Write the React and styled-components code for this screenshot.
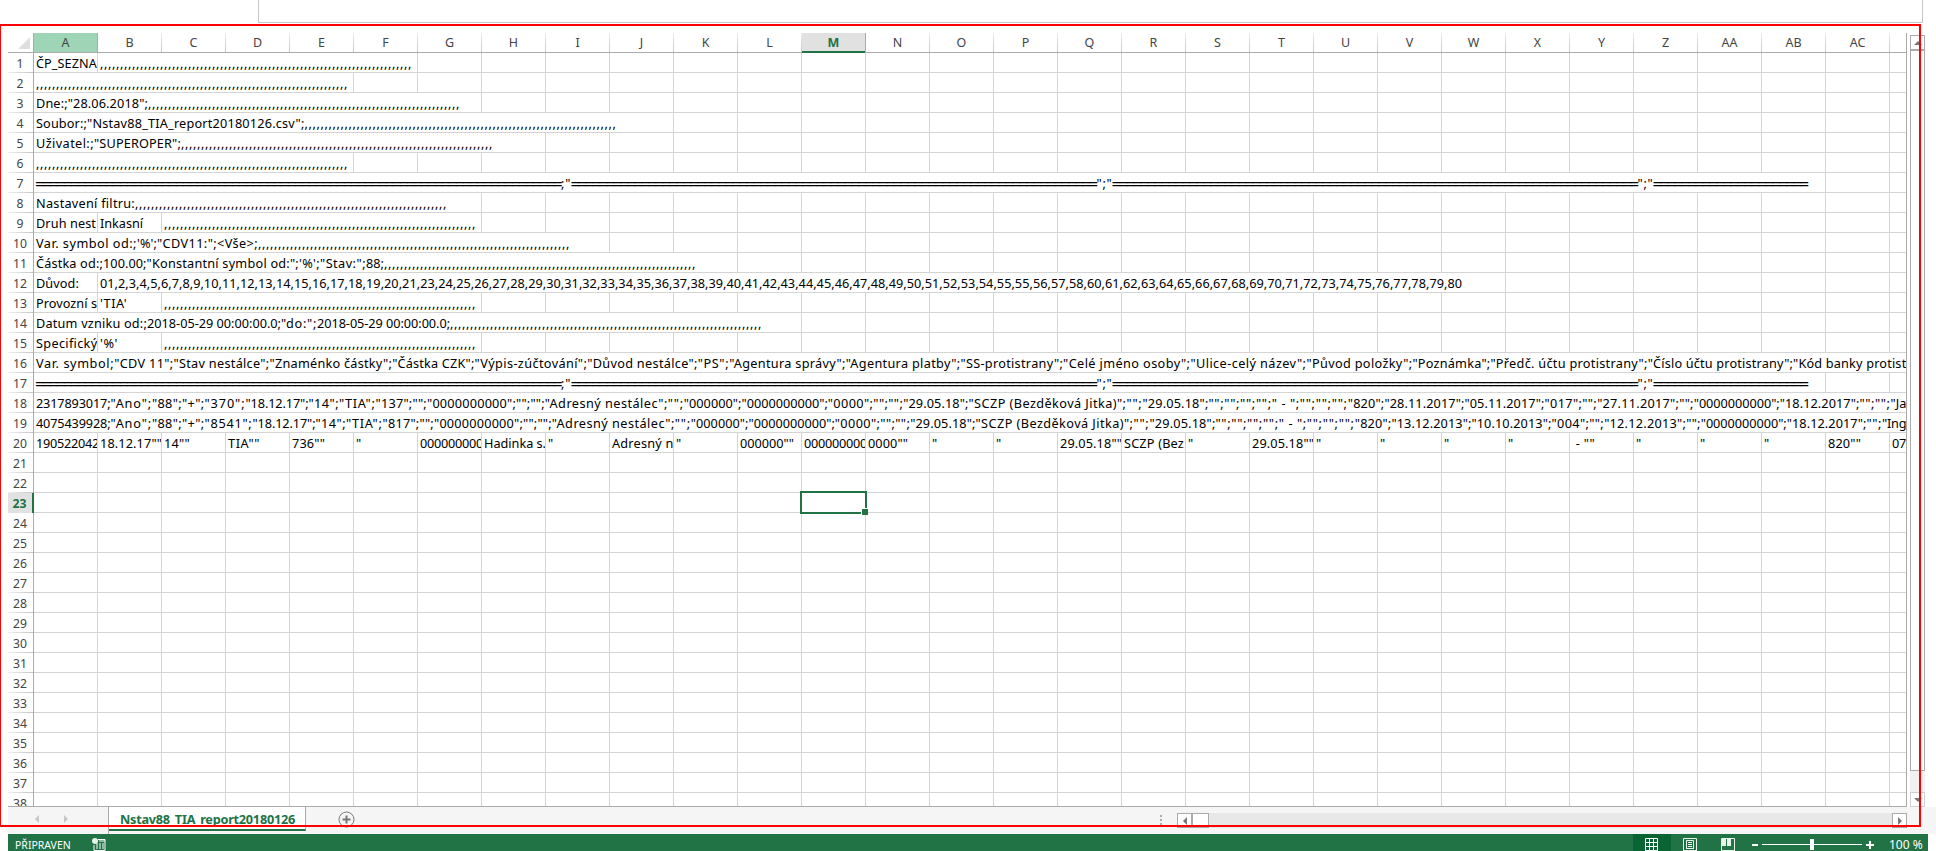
import React, { useLayoutEffect, useRef, useState } from 'react';
import styled, { createGlobalStyle, css } from 'styled-components';

const GREEN = '#217346';
const COL = 64;
const ROW = 20;

const Global = createGlobalStyle`
  * { box-sizing: border-box; }
  body { margin: 0; background: #fff; overflow: hidden; font-family: 'Noto Sans', 'Open Sans', sans-serif; }
`;

const Page = styled.div`
  position: relative;
  width: 1936px;
  height: 851px;
  overflow: hidden;
  display: flex;
  flex-direction: column;
`;

const FormulaBar = styled.div`
  flex: none;
  width: 1665px;
  height: 23px;
  margin-left: 258px;
  border: 1px solid #c6c6c6;
  border-top: 0;
`;

const Workspace = styled.div`
  flex: none;
  display: flex;
  height: 784px;
  padding: 10px 0 0 8px;
`;

const Sheet = styled.div`
  width: 1899px;
  height: 774px;
  overflow: hidden;
  border-right: 1px solid #ababab;
  border-bottom: 1px solid #ababab;
`;

const HeaderRow = styled.div`
  display: flex;
  height: 20px;
  border-bottom: 1px solid #ababab;
`;

const Corner = styled.div`
  width: 26px;
  height: 19px;
  flex: none;
  border-right: 1px solid #ababab;
  padding: 4px 0 0 10px;
  svg { display: block; }
`;

const ColumnHead = styled.div`
  flex: none;
  width: ${COL}px;
  height: 19px;
  line-height: 19px;
  font-size: 12.5px;
  text-align: center;
  color: #444;
  border-right: 1px solid;
  border-image: linear-gradient(#f0f0f0, #c4c4c4) 1;
  ${(p) => p.$tone === 'hover' && css`background: #9fd5b7; border-image: none; border-color: #ababab;`}
  ${(p) => p.$tone === 'active' && css`
    background: #e1e1e1; color: ${GREEN}; font-weight: 700;
    height: 20px; border-image: none; border-color: #ababab;
    box-shadow: inset 0 -2px ${GREEN};
  `}
`;

const SheetRow = styled.div`
  display: flex;
  height: ${ROW}px;
`;

const RowHead = styled.div`
  flex: none;
  width: 26px;
  height: ${ROW}px;
  line-height: 21px;
  padding-right: 1px;
  font-size: 12.2px;
  text-align: center;
  color: #444;
  border-right: 1px solid #ababab;
  background: linear-gradient(90deg, #f0f0f0, #c4c4c4) 0 100% / 100% 1px no-repeat;
  ${(p) => p.$active && css`
    background: #e1e1e1; color: ${GREEN}; font-weight: 700;
    border-right: 2px solid ${GREEN};
  `}
`;

const Cell = styled.div`
  position: relative;
  flex: none;
  width: ${(p) => p.$span * COL}px;
  height: ${ROW}px;
  padding-left: 2px;
  border-right: 1px solid #d4d4d4;
  border-bottom: 1px solid #d4d4d4;
  overflow: ${(p) => (p.$selected ? 'visible' : 'hidden')};
  display: flex;
`;

const RunBox = styled.span`
  flex: none;
  display: block;
  width: ${(p) => p.$width}px;
  height: 19px;
  line-height: 21px;
  font-size: 12.7px;
  white-space: pre;
  ${(p) => p.$rule && css`font-size: 17px; text-indent: -1px;`}
`;

const Selection = styled.div`
  position: absolute;
  left: -2px;
  top: -2px;
  width: 67px;
  height: 23px;
  border: 2px solid ${GREEN};
  z-index: 2;
  &::after {
    content: '';
    position: absolute;
    right: -3px;
    bottom: -3px;
    width: 6px;
    height: 6px;
    background: ${GREEN};
    border-left: 1px solid #fff;
    border-top: 1px solid #fff;
  }
`;

const VerticalScroll = styled.div`
  width: 15px;
  margin: 2px 0 0 3px;
  height: 773px;
  background: #f0f0f0;
  display: flex;
  flex-direction: column;
`;

const ScrollButton = styled.div`
  flex: none;
  width: 15px;
  height: 15px;
  border: 1px solid ${(p) => (p.$light ? '#d0d0d0' : '#ababab')};
  background: #fff;
  display: flex;
  align-items: center;
  justify-content: center;
`;

const VerticalThumb = styled.div`
  height: 721px;
  border: 1px solid #ababab;
  background: #fff;
  margin-bottom: 21px;
`;

const TabBar = styled.div`
  flex: none;
  display: flex;
  width: 1928px;
  height: 27px;
  margin-left: 8px;
  background: #f5f5f5;
`;

const TabNav = styled.div`
  width: 101px;
  height: 27px;
  border-right: 1px solid #ababab;
  padding: 8px 0 0 25px;
  display: flex;
  gap: 21px;
`;

const SheetTab = styled.div`
  width: 197px;
  height: 24px;
  background: #fff;
  border-right: 1px solid #ababab;
  border-bottom: 2px solid ${GREEN};
  color: ${GREEN};
  font-weight: 700;
  padding: 2px 0 0 11px;
`;

const AddSheet = styled.div`
  width: 90px;
  padding: 4px 0 0 32px;
`;

const HorizontalArea = styled.div`
  display: flex;
  margin-left: auto;
  width: 776px;
  padding-top: 6px;
`;

const Grip = styled.div`
  display: flex;
  flex-direction: column;
  gap: 2px;
  width: 17px;
  padding-top: 2px;
  i { width: 2px; height: 2px; background: #ababab; }
`;

const HorizontalTrack = styled.div`
  display: flex;
  width: 730px;
  height: 15px;
  background: #e8e8e8;
`;

const HorizontalThumb = styled.div`
  width: 17px;
  height: 15px;
  border: 1px solid #ababab;
  background: #fff;
  margin-right: auto;
`;

const StatusBar = styled.div`
  flex: none;
  display: flex;
  width: 1920px;
  height: 17px;
  margin-left: 8px;
  background: ${GREEN};
  color: #fff;
  overflow: hidden;
`;

const StatusLabel = styled.div`
  width: 84px;
  padding-left: 7px;
  font-size: 10.5px;
  line-height: 22px;
  white-space: nowrap;
`;

const StatusIcon = styled.div`
  padding-top: 4px;
  height: 17px;
  svg { display: block; }
`;

const ViewButtons = styled.div`
  display: flex;
  margin-left: auto;
`;

const ViewButton = styled.div`
  width: 38px;
  height: 17px;
  padding: 4px 0 0 12px;
  background: ${(p) => (p.$active ? '#0a6332' : 'transparent')};
  svg { display: block; }
`;

const Zoom = styled.div`
  display: flex;
  width: 181px;
  padding-left: 4px;
`;

const ZoomLabel = styled.div`
  font-size: 12px;
  line-height: 22px;
  padding-left: 14px;
  white-space: pre;
`;

const RedFrame = styled.div`
  position: absolute;
  left: 0;
  top: 24px;
  width: 1921px;
  height: 803px;
  border: 2px solid #f00;
  border-left-width: 1px;
  z-index: 5;
`;

/* Spreads the glyphs of a text run over a given width. */
function Run({ text, width }) {
  const ref = useRef(null);
  const [spacing, setSpacing] = useState(0);
  useLayoutEffect(() => {
    const range = document.createRange();
    range.selectNodeContents(ref.current);
    ref.current.style.letterSpacing = '0px';
    const natural = range.getBoundingClientRect().width;
    const value = (width - natural) / text.length;
    ref.current.style.letterSpacing = `${value}px`;
    setSpacing(value);
  }, [text, width]);
  return (
    <RunBox ref={ref} $width={width} $rule={text.startsWith('==')} style={{ letterSpacing: spacing }}>
      {text}
    </RunBox>
  );
}

const commas = [','.repeat(78), 312];
const rule = '='.repeat(75);

/* Turns "start, text" pairs into runs, each as wide as the gap to the next start. */
const track = (end, ...parts) => {
  const runs = [];
  for (let i = 0; i < parts.length; i += 2) {
    runs.push([parts[i + 1], (parts[i + 2] ?? end) - parts[i]]);
  }
  return runs;
};

const ruler = track(1807, 35.5, rule, 560.5, ';"', 571, rule, 1096, '";"', 1112, rule, 1637, '";"', 1653, '='.repeat(22));

const numbers = (() => {
  const list = ['01'];
  for (let n = 2; n <= 80; n += 1) {
    if (n === 22 || n === 59) continue;
    list.push(n);
    if (n === 55) list.push(n);
  }
  return list.join(',');
})();

const record = (id, amount, code, s, dates, tail) => track(
  1906,
  35.5, `${id};`, 110, '"Ano";', 151.5, '"88";', 181.5, '"+";', 204, `"${amount}";`,
  245 + s, '"18.12.17";', 308 + s, '"14";', 338.5 + s, '"TIA";', 375 + s, `"${code}";"";`,
  426.5 + s, '"0000000000";"";"";', 544.3 + s, '"Adresný nestálec";', 667.3 + s, '"";',
  683.3 + s, '"000000";', 741 + s, '"0000000000";', 827.3 + s, '"0000";"";"";',
  902.7 + s, '"29.05.18";', 968 + s, '"SCZP (Bezděková Jitka)";', 1126 + s, '"";',
  1142 + s, '"29.05.18";', 1208 + s, '"";"";"";"";', 1271.3 + s, '" - ";', 1299.3 + s, '"";"";"";',
  1347.3 + s, '"820";', 1384 + s, `"${dates[0]}";`, 1464 + s, `"${dates[1]}";`,
  1544 + s, `"${dates[2]}";"";`, 1596.7 + s, `"${dates[3]}";"";`, 1693.3 + s, '"0000000000";',
  1779.3 + s, '"18.12.2017";', ...tail,
);

/* Row number -> list of [span, runs]. Cells that are not listed are empty. */
const rows = {
  1: [[1, [['ČP_SEZNA', 61]]], [5, [commas]]],
  2: [[5, [commas]]],
  3: [[7, [['Dne:;"28.06.2018";', 112], commas]]],
  4: [[10, [['Soubor:;', 51], ['"Nstav88_TIA_report20180126.csv";', 217.5], commas]]],
  5: [[8, [['Uživatel:;', 58], ['"SUPEROPER";', 87], commas]]],
  6: [[5, [commas]]],
  7: [[28, ruler]],
  8: [[7, [['Nastavení filtru:', 99], commas]]],
  9: [[1, [['Druh nest', 60]]], [1, [['Inkasní', 43]]], [5, [commas]]],
  10: [[9, [['Var. symbol od:;', 101], ["'%';", 20], ['"CDV11:";', 60], ['<Vše>;', 41], commas]]],
  11: [[11, [['Částka od:;', 67], ['100.00;', 43.5], ['"Konstantní symbol od:";', 152.5], ["'%';", 21], ['"Stav:";', 46], ['88;', 18], commas]]],
  12: [[1, [['Důvod:', 43]]], [22, [[numbers, 1362]]]],
  13: [[1, [['Provozní s', 61]]], [1, [["'TIA'", 27]]], [5, [commas]]],
  14: [[12, [['Datum vzniku od:;', 111], ['2018-05-29 00:00:00.0;', 134], ['"do:";', 36], ['2018-05-29 00:00:00.0;', 133], commas]]],
  15: [[1, [['Specifický', 61.5]]], [1, [["'%'", 18]]], [5, [commas]]],
  16: [[30, track(1906, 35.5, 'Var. symbol;', 113.7, '"CDV 11";', 173, '"Stav nestálce";', 269, '"Znaménko částky";',
    391.7, '"Částka CZK";', 474, '"Výpis-zúčtování";', 586.7, '"Důvod nestálce";', 697.3, '"PS";',
    728.7, '"Agentura správy";', 845.3, '"Agentura platby";', 960, '"SS-protistrany";', 1062.7, '"Celé jméno osoby";',
    1190, '"Ulice-celý název";', 1306, '"Původ položky";', 1412, '"Poznámka";', 1490, '"Předč. účtu protistrany";',
    1647.3, '"Číslo účtu protistrany";', 1792.7, '"Kód banky protist')]],
  17: [[28, ruler]],
  18: [[30, record('2317893017', '370', '137', 0, ['28.11.2017', '05.11.2017', '017', '27.11.2017'], [1859, '"";"";', 1890, '"Ja'])]],
  19: [[30, record('4075439928', '8541', '817', 7, ['13.12.2013', '10.10.2013', '004', '12.12.2013'], [1866, '"";', 1881.5, '"Ing'])]],
  20: [
    ['190522042', 63], ['18.12.17""', 62], ['14""', 26], ['TIA""', 32], ['736""', 33], ['"', 6], ['0000000000', 70],
    ['Hadinka s.', 62], ['"', 6], ['Adresný n', 61.5], ['"', 6], ['000000""', 54], ['0000000000', 70], ['0000""', 40],
    ['"', 6], ['"', 6], ['29.05.18""', 62], ['SCZP (Bez', 60], ['"', 6], ['29.05.18""', 62], ['"', 6], ['"', 6], ['"', 6],
    ['"', 6], [' - ""', 23], ['"', 6], ['"', 6], ['"', 6], ['820""', 33], ['07', 14],
  ].map((run) => [1, [run]]),
};

const columns = Array.from({ length: 30 }, (_, i) => (i < 26 ? '' : 'A') + String.fromCharCode(65 + (i % 26)));

const Arrow = ({ dir, color = '#777', size = 8 }) => {
  const d = { up: 'M0 6L4 2L8 6Z', down: 'M0 2L4 6L8 2Z', left: 'M6 0L2 4L6 8Z', right: 'M2 0L6 4L2 8Z' }[dir];
  return <svg width={size} height={size} viewBox="0 0 8 8"><path d={d} fill={color} /></svg>;
};

function GridRow({ n }) {
  const cells = [...(rows[n] || [])];
  let used = cells.reduce((sum, c) => sum + c[0], 0);
  while (used < 30) {
    cells.push([1, []]);
    used += 1;
  }
  return (
    <SheetRow>
      <RowHead $active={n === 23}>{n}</RowHead>
      {cells.map(([span, runs], i) => (
        <Cell key={i} $span={span} $selected={n === 23 && i === 12}>
          {runs.map(([text, width], k) => <Run key={k} text={text} width={width} />)}
          {n === 23 && i === 12 && <Selection />}
        </Cell>
      ))}
    </SheetRow>
  );
}

export default function App() {
  return (
    <Page>
      <Global />
      <FormulaBar />
      <Workspace>
        <Sheet>
          <HeaderRow>
            <Corner><svg width="12" height="12"><path d="M12 0V12H0Z" fill="#dfdfdf" /></svg></Corner>
            {columns.map((c, i) => (
              <ColumnHead key={c} $tone={c === 'A' ? 'hover' : c === 'M' ? 'active' : undefined}>{i < 29 ? c : ''}</ColumnHead>
            ))}
          </HeaderRow>
          {Array.from({ length: 38 }, (_, i) => <GridRow key={i} n={i + 1} />)}
        </Sheet>
        <VerticalScroll>
          <ScrollButton><Arrow dir="up" /></ScrollButton>
          <VerticalThumb />
          <ScrollButton $light><Arrow dir="down" /></ScrollButton>
        </VerticalScroll>
      </Workspace>
      <TabBar>
        <TabNav><Arrow dir="left" color="#c6c6c6" /><Arrow dir="right" color="#c6c6c6" /></TabNav>
        <SheetTab><Run text="Nstav88_TIA_report20180126" width={175} /></SheetTab>
        <AddSheet>
          <svg width="17" height="17" viewBox="0 0 17 17" fill="none" stroke="#777">
            <circle cx="8.5" cy="8.5" r="7.5" /><path d="M8.5 4.5v8M4.5 8.5h8" strokeWidth="2" />
          </svg>
        </AddSheet>
        <HorizontalArea>
          <Grip><i /><i /><i /></Grip>
          <HorizontalTrack>
            <ScrollButton><Arrow dir="left" /></ScrollButton>
            <HorizontalThumb />
            <ScrollButton><Arrow dir="right" /></ScrollButton>
          </HorizontalTrack>
        </HorizontalArea>
      </TabBar>
      <StatusBar>
        <StatusLabel>PŘIPRAVEN</StatusLabel>
        <StatusIcon>
          <svg width="14" height="13" viewBox="0 0 14 13">
            <path d="M6 1.5h7v11H2V7" fill="none" stroke="#fff" />
            <path d="M7 3h6M4 6h2M7 6h2M10 6h2M4 8h2M7 8h2M10 8h2M4 10h2M7 10h2M10 10h2" stroke="#fff" />
            <circle cx="3" cy="3" r="3" fill="#e6f2ea" />
          </svg>
        </StatusIcon>
        <ViewButtons>
          <ViewButton $active>
            <svg width="14" height="13" viewBox="0 0 14 13" stroke="#fff" fill="none">
              <path d="M.5 .5h12v13M.5 .5v13M4.5 0v13M8.5 0v13M0 4.5h13M0 8.5h13M0 12.5h13" />
            </svg>
          </ViewButton>
          <ViewButton>
            <svg width="14" height="13" viewBox="0 0 14 13" stroke="#e6f2ea" fill="none">
              <path d="M.5 13V.5h13V13M0 12.5h14M3.5 11V2.5h7v8.5M3 10.5h8M5 4.5h4M5 6.5h4M5 8.5h4" />
            </svg>
          </ViewButton>
          <ViewButton>
            <svg width="14" height="13" viewBox="0 0 14 13">
              <path d="M.5 13V.5h13V13M0 12.5h14" stroke="#e6f2ea" fill="none" />
              <path d="M1 1h4v7H1ZM6 1h4v7H6Z" fill="#e6f2ea" />
            </svg>
          </ViewButton>
        </ViewButtons>
        <Zoom>
          <svg width="124" height="17">
            <path d="M1 11h6M115 11h8M119 7v8" stroke="#fff" strokeWidth="2" />
            <path d="M11 10.5h100" stroke="#fff" />
            <path d="M59 5h4v11h-4Z" fill="#fff" />
          </svg>
          <ZoomLabel>100 %</ZoomLabel>
        </Zoom>
      </StatusBar>
      <RedFrame />
    </Page>
  );
}
